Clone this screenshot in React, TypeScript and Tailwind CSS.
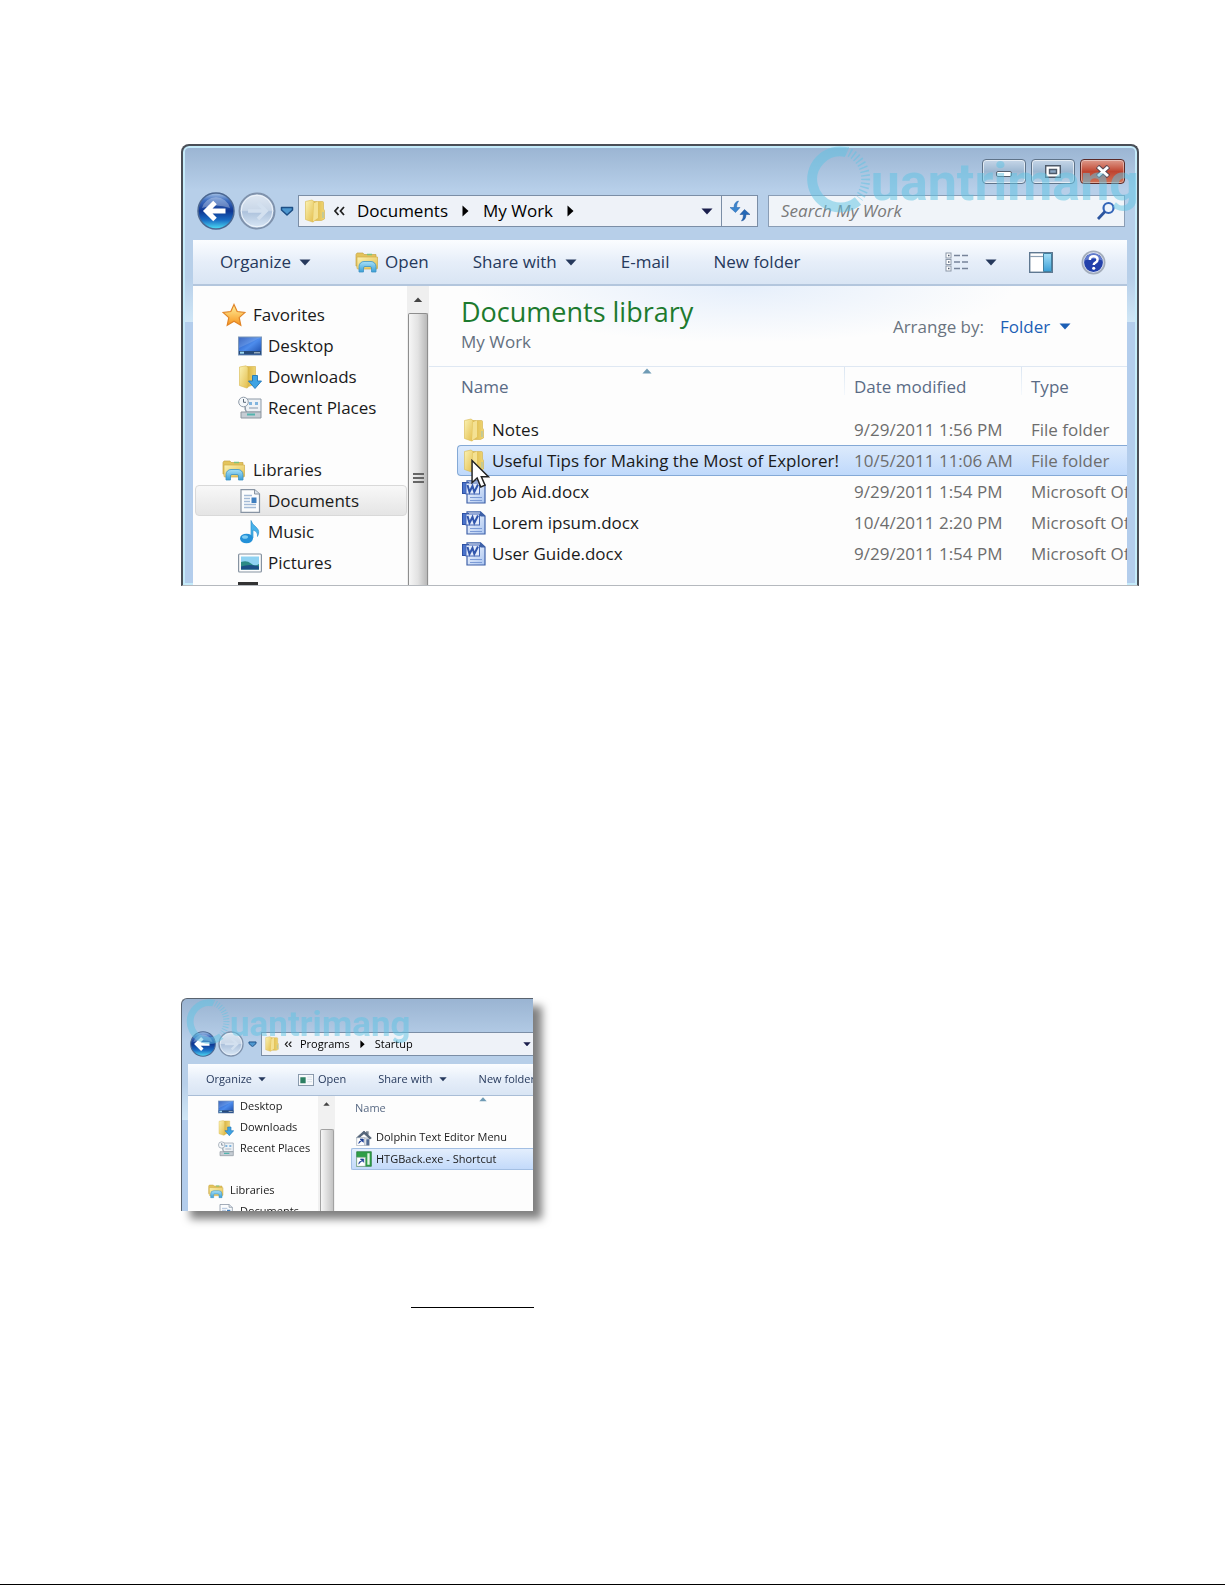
import type { ReactNode } from "react";
import clsx from "clsx";

type IconProps = { className?: string };

type NavItem = {
    label: string;
    icon: (p: IconProps) => ReactNode;
    selected?: boolean;
};

type FileRow = {
    name: string;
    modified: string;
    type: string;
    kind: "folder" | "word";
    selected?: boolean;
};

// Gradients shared by every icon on the page
function Gradients() {
    return (
        <svg width="0" height="0" className="absolute" aria-hidden="true">
            <defs>
                <linearGradient id="navBlue" x1="0" y1="0" x2="0" y2="1">
                    <stop offset="0" stopColor="#a9c4e6" />
                    <stop offset="0.2" stopColor="#3f6fc0" />
                    <stop offset="0.5" stopColor="#0d3591" />
                    <stop offset="0.75" stopColor="#1a6cc4" />
                    <stop offset="1" stopColor="#4fe0f5" />
                </linearGradient>
                <linearGradient id="navGlass" x1="0" y1="0" x2="0" y2="1">
                    <stop offset="0" stopColor="#dfe8f3" />
                    <stop offset="0.48" stopColor="#c9d7e8" />
                    <stop offset="0.52" stopColor="#adc2dc" />
                    <stop offset="1" stopColor="#dbe9f7" />
                </linearGradient>
                <linearGradient id="folderFront" x1="0" y1="0" x2="1" y2="1">
                    <stop offset="0" stopColor="#fbf3b4" />
                    <stop offset="1" stopColor="#e3bd4c" />
                </linearGradient>
                <linearGradient id="folderBack" x1="0" y1="0" x2="1" y2="0">
                    <stop offset="0" stopColor="#d8b344" />
                    <stop offset="1" stopColor="#f0d674" />
                </linearGradient>
                <linearGradient id="sky" x1="0" y1="0" x2="0" y2="1">
                    <stop offset="0" stopColor="#a6e0f8" />
                    <stop offset="1" stopColor="#3b9fd6" />
                </linearGradient>
                <linearGradient id="starFill" x1="0" y1="0" x2="0" y2="1">
                    <stop offset="0" stopColor="#fff3a0" />
                    <stop offset="1" stopColor="#f7941d" />
                </linearGradient>
                <linearGradient id="screen" x1="0" y1="0" x2="1" y2="1">
                    <stop offset="0" stopColor="#1b4db4" />
                    <stop offset="0.5" stopColor="#4d8cec" />
                    <stop offset="1" stopColor="#1746a4" />
                </linearGradient>
                <linearGradient id="wordPage" x1="0" y1="0" x2="1" y2="1">
                    <stop offset="0" stopColor="#ffffff" />
                    <stop offset="1" stopColor="#a9c4f0" />
                </linearGradient>
            </defs>
        </svg>
    );
}

function BackIcon({ className }: IconProps) {
    return (
        <svg viewBox="0 0 38 38" className={className} aria-hidden="true">
            <circle cx="19" cy="19" r="18" fill="url(#navBlue)" stroke="#4b6791" strokeWidth="1.5" />
            <path d="M5 16a14.500 14.500 0 0 1 28 0q-14-5-28 0z" fill="#fff" opacity="0.3" />
            <path d="M18 10.500 9.500 19l8.500 8.500M11 19h17.500" fill="none" stroke="#fff" strokeWidth="5" />
        </svg>
    );
}

function ForwardIcon({ className }: IconProps) {
    return (
        <svg viewBox="0 0 38 38" className={className} aria-hidden="true">
            <circle cx="19" cy="19" r="17.500" fill="url(#navGlass)" stroke="#7f92ac" strokeWidth="2" />
            <circle cx="19" cy="19" r="15.800" fill="none" stroke="#eef4fb" strokeWidth="1" />
            <path d="m20 11 8 8-8 8M27 19H10" fill="none" stroke="#d3e0ef" strokeWidth="3.500" />
        </svg>
    );
}

function FolderIcon({ className }: IconProps) {
    return (
        <svg viewBox="0 0 24 24" className={className} aria-hidden="true">
            <path d="M10 2.500h9.500a1 1 0 0 1 1 1V10l1 1.500V20l-3 1.500H10z" fill="url(#folderBack)" stroke="#d4b04a" strokeWidth="0.600" />
            <path d="M2.500 2.500 9 1l2 1.500v20L9.500 23l-7-2.500z" fill="url(#folderFront)" stroke="#d9b84f" strokeWidth="0.600" />
            <path d="m11 4 4-1.500V19l-5 3.500z" fill="#f4e193" />
            <path d="M20 13v6" stroke="#b9c7a0" strokeWidth="1.500" />
        </svg>
    );
}

function LibraryIcon({ className }: IconProps) {
    return (
        <svg viewBox="0 0 24 24" className={className} aria-hidden="true">
            <path d="M1 4.500 2 3h6l1 1.500h12V16H1z" fill="#e3c45c" stroke="#c7a545" strokeWidth="0.700" />
            <path d="M2 7h20.500v11a1 1 0 0 1-1 1H3a1 1 0 0 1-1-1z" fill="url(#folderFront)" stroke="#d0ad48" strokeWidth="0.700" />
            <path d="M12 4.500h5" stroke="#7fc27c" strokeWidth="1.500" />
            <path d="M4 22v-5.500a5 5 0 0 1 5-5h7a5 5 0 0 1 5 5V22h-4.500v-4a1.500 1.500 0 0 0-1.500-1.500h-5A1.500 1.500 0 0 0 8.500 18v4z" fill="url(#sky)" stroke="#3c93c4" strokeWidth="0.800" />
        </svg>
    );
}

function StarIcon({ className }: IconProps) {
    return (
        <svg viewBox="0 0 24 24" className={className} aria-hidden="true">
            <path d="m12 1.500 3.200 7 7.800.9-5.800 5.200 1.600 7.600-6.800-3.900-6.800 3.900 1.600-7.600L1 9.400l7.800-.9z" fill="url(#starFill)" stroke="#e08427" strokeWidth="1.200" />
        </svg>
    );
}

function DesktopIcon({ className }: IconProps) {
    return (
        <svg viewBox="0 0 24 24" className={className} aria-hidden="true">
            <rect x="0.500" y="3" width="23" height="18" fill="url(#screen)" stroke="#7d97b8" />
            <path d="M1 3.500h22L1 14z" fill="#fff" opacity="0.150" />
            <rect x="1" y="17" width="22" height="3.500" fill="#274a78" />
            <path d="M2 18.700h4" stroke="#9fd8f0" strokeWidth="2" />
            <path d="M16 18.700h6" stroke="#96a9bd" strokeWidth="1.500" />
        </svg>
    );
}

function DownloadsIcon({ className }: IconProps) {
    return (
        <svg viewBox="0 0 24 24" className={className} aria-hidden="true">
            <path d="M9 1.500h8.500V19L9 22z" fill="url(#folderBack)" stroke="#d4b04a" strokeWidth="0.600" />
            <path d="M1.500 2 8 .8l2 1.700v20l-1.500.500-7-2.500z" fill="url(#folderFront)" stroke="#d9b84f" strokeWidth="0.600" />
            <path d="M14.500 10.500h5V16h4L17 23.500 10.500 16h4z" fill="#3fa3e3" stroke="#1f76b8" strokeWidth="0.900" />
        </svg>
    );
}

function RecentIcon({ className }: IconProps) {
    return (
        <svg viewBox="0 0 24 24" className={className} aria-hidden="true">
            <path d="M6 3h17v13H8z" fill="#eef2f6" stroke="#8d99a6" />
            <path d="M11 6h3v3h-3zM17 6h3v3h-3z" fill="#7fb4de" />
            <path d="M11 12h9" stroke="#a8b6c4" strokeWidth="1.500" />
            <path d="M3 16h20v6H3z" fill="#c5ccd3" stroke="#8d969f" />
            <path d="M9 18.500h8" stroke="#52b4ae" strokeWidth="2" />
            <path d="M7 10q-1 4 2 6" fill="none" stroke="#8d99a6" />
            <circle cx="5.500" cy="6" r="4.800" fill="#f4f7fa" stroke="#8f9ba8" />
            <path d="M5.500 3v3.300H8" fill="none" stroke="#5b6a7a" />
        </svg>
    );
}

function DocumentIcon({ className }: IconProps) {
    return (
        <svg viewBox="0 0 24 24" className={className} aria-hidden="true">
            <path d="M3 .7h13.500L21.500 5v18.300H3z" fill="#fbfcfd" stroke="#8894a3" strokeWidth="1.200" />
            <path d="M16.500.7V5h5" fill="#dbe2ea" stroke="#8894a3" />
            <path d="M6 6.500h8M6 9.500h6M6 12.500h6M6 15.500h12M6 18.500h12" stroke="#a3bad6" strokeWidth="1.300" />
            <path d="M13.500 8.500h5V14h-5z" fill="#3f7fc0" />
        </svg>
    );
}

function MusicIcon({ className }: IconProps) {
    return (
        <svg viewBox="0 0 24 24" className={className} aria-hidden="true">
            <path d="M13 .5q1 3.500 5 6.500 4.500 4 1.500 9.500.500-5-4.500-6.500v8h-2z" fill="#48b2ea" stroke="#2487c4" strokeWidth="0.600" />
            <ellipse cx="8.500" cy="18.500" rx="6.500" ry="4.800" fill="#2491d8" />
            <ellipse cx="7" cy="17" rx="3" ry="1.800" fill="#7fcdf3" />
        </svg>
    );
}

function PicturesIcon({ className }: IconProps) {
    return (
        <svg viewBox="0 0 24 24" className={className} aria-hidden="true">
            <rect x="0.600" y="3" width="22.800" height="18" rx="1" fill="#fdfdfd" stroke="#8693a1" strokeWidth="1.200" />
            <path d="M3 5.500h18v13H3z" fill="#8fd2f2" />
            <path d="M3 11q6-2 10 1.500t8 .5v5.500H3z" fill="#2c8a86" />
            <path d="M3 15.500q9-3 18 0v3H3z" fill="#1c4f86" />
        </svg>
    );
}

function WordIcon({ className }: IconProps) {
    return (
        <svg viewBox="0 0 24 24" className={className} aria-hidden="true">
            <path d="M5 .8h13.500L23 5v18H5z" fill="url(#wordPage)" stroke="#3e61a8" strokeWidth="1.200" />
            <path d="M18.500.8V5H23" fill="#3e61a8" stroke="#3e61a8" />
            <path d="M8 17.500h12M8 20.500h12" stroke="#7c9bd6" strokeWidth="1.200" />
            <rect x="0.500" y="2.500" width="6" height="11" fill="#4b74cc" stroke="#2f51a3" />
            <rect x="4" y="3" width="13.500" height="11" fill="#e4ecfb" stroke="#4467b5" />
            <path d="m5.500 5 2 7 3-6 1.800 6L16 4.500" fill="none" stroke="#3156ac" strokeWidth="2" />
        </svg>
    );
}

function AppWindowIcon({ className }: IconProps) {
    return (
        <svg viewBox="0 0 24 18" className={className} aria-hidden="true">
            <rect x="0.700" y="0.700" width="22.600" height="16.600" fill="#f7f9fb" stroke="#8494a8" strokeWidth="1.400" />
            <path d="M3.500 5h8v9h-8z" fill="#2d7f62" />
            <path d="M14 4.500h7M14 8h7M14 11.500h7" stroke="#c8d3df" />
        </svg>
    );
}

function HomeShortcutIcon({ className }: IconProps) {
    return (
        <svg viewBox="0 0 24 24" className={className} aria-hidden="true">
            <path d="M4 12h16v11H4z" fill="#e5e9ee" stroke="#8793a0" />
            <path d="M15 2h4v5h-4z" fill="#7b8794" />
            <path d="M12 1.500 23 12l-2 1.500L12 5.500 3 13l-2-1.500z" fill="#56677c" stroke="#43536a" />
            <path d="M15.500 14h4v9h-4z" fill="#526b92" />
            <path d="M1 11.500h12v12H1z" fill="#fff" stroke="#9aa7b5" />
            <path d="M4 20.500q0-4.500 5-4.500M6 13.500h5v5z" fill="#1d3f95" stroke="#1d3f95" />
        </svg>
    );
}

function ExeShortcutIcon({ className }: IconProps) {
    return (
        <svg viewBox="0 0 24 24" className={className} aria-hidden="true">
            <path d="M1 1h22v22H1z" fill="#2f9e48" stroke="#1c7331" />
            <path d="M17 3.500h3.500v17H17z" fill="#e4f6e6" />
            <path d="M1 9.500h13v13.500H1z" fill="#fff" stroke="#8aa897" />
            <path d="M4 20q0-5 5-5M6.500 12h5v5z" fill="#1d3f95" stroke="#1d3f95" />
        </svg>
    );
}

function RefreshIcon({ className }: IconProps) {
    return (
        <svg viewBox="0 0 22 22" className={className} aria-hidden="true">
            <path d="M9.500 1Q5 2 5 7.500H1l5.500 5 4.500-5H7.500Q7.500 3.500 9.500 1z" fill="#3b86cf" stroke="#1f5fa9" strokeWidth="0.500" />
            <path d="M12.500 21q4.500-1 4.500-6.500h4l-5.500-5-4.500 5h3.500q0 4-2 6.500z" fill="#2468b6" stroke="#1c4f93" strokeWidth="0.500" />
        </svg>
    );
}

function SearchIcon({ className }: IconProps) {
    return (
        <svg viewBox="0 0 20 20" className={className} aria-hidden="true">
            <circle cx="12.500" cy="7" r="5" fill="#eef4fc" stroke="#3465b8" strokeWidth="2.200" />
            <path d="m9 10.500-7 7.500" stroke="#2c559f" strokeWidth="2.800" />
        </svg>
    );
}

function ViewIcon({ className }: IconProps) {
    return (
        <svg viewBox="0 0 24 20" className={className} aria-hidden="true">
            {[1, 7.5, 14].map((y) => (
                <g key={y}>
                    <rect x="1" y={y} width="5" height="5" fill="#fff" stroke="#8b97a8" />
                    <path d={`M3 ${y + 2.5}h1.500`} stroke="#4d5b70" strokeWidth="1.500" />
                    <path d={`M9 ${y + 2.5}h6M17 ${y + 2.5}h6`} stroke="#77849a" strokeWidth="1.500" />
                </g>
            ))}
        </svg>
    );
}

function PreviewIcon({ className }: IconProps) {
    return (
        <svg viewBox="0 0 24 21" className={className} aria-hidden="true">
            <rect x="0.700" y="0.700" width="22.600" height="19.600" fill="#fff" stroke="#5f7891" strokeWidth="1.400" />
            <path d="M1 4.500h22" stroke="#8ca0b4" strokeWidth="1.200" />
            <path d="M14.500 1.500h8v18h-8z" fill="url(#sky)" stroke="#42809f" />
        </svg>
    );
}

function HelpIcon({ className }: IconProps) {
    return (
        <svg viewBox="0 0 24 24" className={className} aria-hidden="true">
            <circle cx="12" cy="12" r="11.500" fill="#a3adbb" />
            <circle cx="12" cy="12" r="9.500" fill="#2341ab" stroke="#d8dfee" strokeWidth="1" />
            <path d="M3.500 10a8.700 8.700 0 0 1 17 0q-8.500-3-17 0z" fill="#8ba2e4" opacity="0.600" />
            <path d="M8.500 9.500q0-3.500 3.700-3.500t3.700 3.200q0 2-2 3-1.700.9-1.700 2.300" fill="none" stroke="#fff" strokeWidth="2.400" />
            <circle cx="12.200" cy="17.500" r="1.500" fill="#fff" />
        </svg>
    );
}

function Caret({ className }: IconProps) {
    return (
        <svg viewBox="0 0 12 7" className={clsx("shrink-0", className)} aria-hidden="true">
            <path d="M.5.500h11L6 6.500z" fill="currentColor" />
        </svg>
    );
}

// Rounded, outlined caret beside the travel buttons
function HistoryCaret({ className }: IconProps) {
    return (
        <svg viewBox="0 0 14 10" className={clsx("shrink-0", className)} aria-hidden="true">
            <path d="M1.500 1.500h11V4L7 9 1.500 4z" fill="#4d97cf" stroke="#1d4f86" strokeWidth="1.500" strokeLinejoin="round" />
        </svg>
    );
}

function CaretRight({ className }: IconProps) {
    return (
        <svg viewBox="0 0 7 12" className={clsx("shrink-0", className)} aria-hidden="true">
            <path d="M.5.500v11L6.500 6z" fill="currentColor" />
        </svg>
    );
}

function CaretUp({ className }: IconProps) {
    return (
        <svg viewBox="0 0 12 7" className={clsx("shrink-0", className)} aria-hidden="true">
            <path d="M.5 6.500h11L6 .5z" fill="currentColor" />
        </svg>
    );
}

function Chevrons({ className }: IconProps) {
    return (
        <svg viewBox="0 0 12 10" className={clsx("shrink-0", className)} aria-hidden="true">
            <path d="M5.500 1 2 5l3.500 4M11 1 7.500 5 11 9" fill="none" stroke="#222" strokeWidth="1.800" />
        </svg>
    );
}

function Cursor({ className }: IconProps) {
    return (
        <svg viewBox="0 0 18 28" className={className} aria-hidden="true">
            <path d="M1 1.500v21l4.800-4.500 3.500 8.500 4-1.700-3.500-8h6.700z" fill="#fff" stroke="#222" strokeWidth="1.400" />
        </svg>
    );
}

function WatermarkRing({ className }: IconProps) {
    return (
        <svg viewBox="0 0 68 68" className={className} aria-hidden="true">
            <path d="M43 6A28 28 0 1 0 55 55" fill="none" stroke="currentColor" strokeWidth="10" />
            <path d="M43 5A30 30 0 0 1 56 52" fill="none" stroke="currentColor" strokeWidth="9" strokeDasharray="1.500 2.500" />
        </svg>
    );
}

const favorites: NavItem[] = [
    { label: "Desktop", icon: DesktopIcon },
    { label: "Downloads", icon: DownloadsIcon },
    { label: "Recent Places", icon: RecentIcon },
];

const libraries: NavItem[] = [
    { label: "Documents", icon: DocumentIcon, selected: true },
    { label: "Music", icon: MusicIcon },
    { label: "Pictures", icon: PicturesIcon },
];

const files: FileRow[] = [
    { name: "Notes", modified: "9/29/2011 1:56 PM", type: "File folder", kind: "folder" },
    { name: "Useful Tips for Making the Most of Explorer!", modified: "10/5/2011 11:06 AM", type: "File folder", kind: "folder", selected: true },
    { name: "Job Aid.docx", modified: "9/29/2011 1:54 PM", type: "Microsoft Of", kind: "word" },
    { name: "Lorem ipsum.docx", modified: "10/4/2011 2:20 PM", type: "Microsoft Of", kind: "word" },
    { name: "User Guide.docx", modified: "9/29/2011 1:54 PM", type: "Microsoft Of", kind: "word" },
];

function NavRow({ item }: { item: NavItem }) {
    const Icon = item.icon;
    return (
        <button
            className={clsx(
                "flex h-[31px] shrink-0 items-center gap-1.5 rounded-sm border pl-[42px] text-left",
                item.selected ? "border-[#d9d9d9] bg-linear-to-b from-[#f8f8f8] to-[#e5e5e5]" : "border-transparent",
            )}
        >
            <Icon className="size-6 shrink-0" />
            {item.label}
        </button>
    );
}

function NavHeading({ label, icon: Icon }: NavItem) {
    return (
        <button className="flex h-[31px] shrink-0 items-center gap-[7px] pl-[27px] text-left">
            <Icon className="size-6 shrink-0" />
            {label}
        </button>
    );
}

function WindowButtons() {
    return (
        <div className="flex justify-end gap-[5px]">
            <button aria-label="Minimize" className="grid h-[25px] w-11 place-items-center rounded-sm border border-[#5f7389] bg-linear-to-b from-[#c6d6e8] via-[#9db7d1] to-[#bcd2e8] inset-ring inset-ring-white/60">
                <span className="mt-1 h-[6px] w-4 rounded-xs border border-[#55606e] bg-white" />
            </button>
            <button aria-label="Maximize" className="grid h-[25px] w-11 place-items-center rounded-sm border border-[#5f7389] bg-linear-to-b from-[#c6d6e8] via-[#9db7d1] to-[#bcd2e8] inset-ring inset-ring-white/60">
                <svg viewBox="0 0 16 13" className="w-4" aria-hidden="true">
                    <path d="M.7.7h14.600v11.600H.7z" fill="#fff" stroke="#4d5969" strokeWidth="1.400" />
                    <path d="M4.500 4.500h7v4h-7z" fill="#8ba6c2" stroke="#4d5969" strokeWidth="1.400" />
                </svg>
            </button>
            <button aria-label="Close" className="grid h-[25px] w-[45px] place-items-center rounded-sm border border-[#5a2a28] bg-linear-to-b from-[#dd9a8c] via-[#bf4430] to-[#cf7257] inset-ring inset-ring-white/40">
                <svg viewBox="0 0 16 13" className="w-4" aria-hidden="true">
                    <path d="m2.500 1.500 11 10m0-10-11 10" stroke="#5b4a55" strokeWidth="5" />
                    <path d="m3 2 10 9m0-9L3 11" stroke="#fff" strokeWidth="3" />
                </svg>
            </button>
        </div>
    );
}

function FileTable() {
    return (
        <table className="w-full table-fixed border-separate border-spacing-0 text-left whitespace-nowrap">
            <thead>
                <tr className="h-10 text-[#5a6b85]">
                    <th className="border-t border-[#dfe8f3] pl-8 font-normal">
                        <button>Name</button>
                    </th>
                    <th className="w-[177px] border-t border-[#dfe8f3] bg-linear-to-b from-[#dbe6f2] to-[#f4f8fc] bg-[length:1px_28px] bg-no-repeat pl-2.5 font-normal">
                        <button>Date modified</button>
                    </th>
                    <th className="w-[106px] border-t border-[#dfe8f3] bg-linear-to-b from-[#dbe6f2] to-[#f4f8fc] bg-[length:1px_28px] bg-no-repeat pl-2.5 font-normal">
                        <button>Type</button>
                    </th>
                </tr>
                <tr className="h-2" />
            </thead>
            <tbody>
                {files.map((f) => {
                    const cell = f.selected ? "border-y border-[#84a9d6] bg-linear-to-b from-[#dceafc] to-[#bfd9fb]" : "";
                    return (
                        <tr key={f.name} className="h-[31px] text-[#6d6d6d]">
                            <td className="p-0 pl-7 text-[#1a1a1a]">
                                <div className={clsx("flex h-[31px] items-center gap-1.5 rounded-l-sm border-l pl-1", cell, !f.selected && "border-transparent")}>
                                    {f.kind === "folder" ? <FolderIcon className="size-6 shrink-0" /> : <WordIcon className="size-6 shrink-0" />}
                                    {f.name}
                                </div>
                            </td>
                            <td className={clsx("pl-2.5", cell)}>{f.modified}</td>
                            <td className={clsx("overflow-hidden pl-2.5", cell)}>{f.type}</td>
                        </tr>
                    );
                })}
            </tbody>
        </table>
    );
}

function DocumentsWindow() {
    return (
        <section className="relative flex h-[442px] flex-col overflow-hidden rounded-t-lg border-x-2 border-t-2 border-b border-[#4a4f57] border-b-[#b5b9be] bg-[linear-gradient(#9ab4d2,#b7cfe9_10%,#b7cfe9_30%,#cfe6f6_40%,#b3cdec_40%)] px-2.5 text-[17px] inset-shadow-[0_0_0_2px_#c5ebfa]">
            <div className="pt-[13px] pr-0.5">
                <WindowButtons />
            </div>

            <div className="mt-2 flex items-center">
                <div className="flex items-center gap-[3px] pl-1">
                    <button aria-label="Back">
                        <BackIcon className="size-[38px]" />
                    </button>
                    <button aria-label="Forward">
                        <ForwardIcon className="size-[38px]" />
                    </button>
                </div>
                <button aria-label="Recent pages" className="px-1">
                    <HistoryCaret className="w-3.5" />
                </button>
                <div className="flex h-8 min-w-0 flex-1 items-center border border-[#7b8ea6] bg-[#eef2f8] pl-1">
                    <FolderIcon className="size-6 shrink-0" />
                    <Chevrons className="ml-1.5 w-3" />
                    <button className="ml-3">Documents</button>
                    <CaretRight className="ml-3.5 w-[7px]" />
                    <button className="ml-3.5">My Work</button>
                    <CaretRight className="ml-3.5 w-[7px]" />
                    <button aria-label="Previous locations" className="mr-2 ml-auto">
                        <Caret className="w-3 text-[#1b1f4d]" />
                    </button>
                    <button aria-label="Refresh" className="grid h-full w-9 place-items-center border-l border-[#7b8ea6]">
                        <RefreshIcon className="size-[22px]" />
                    </button>
                </div>
                <label className="mr-0.5 ml-2.5 flex h-8 w-[357px] items-center border border-[#8a9db5] bg-[#f0f4f9] pr-2 pl-3">
                    <input
                        type="text"
                        aria-label="Search My Work"
                        placeholder="Search My Work"
                        className="min-w-0 flex-1 bg-transparent italic outline-none placeholder:text-[#7a7a7a]"
                    />
                    <SearchIcon className="size-5" />
                </label>
            </div>

            <div className="mt-2.5 flex h-[46px] shrink-0 items-center border-b-2 border-[#b3c6dd] bg-linear-to-b from-[#fbfdff] via-[#e6eef9] to-[#d9e5f4] pr-[21px] pl-[27px] whitespace-nowrap text-[#26395c]">
                <button className="flex items-center gap-2">
                    Organize <Caret className="w-3" />
                </button>
                <button className="ml-11 flex items-center gap-1.5">
                    <LibraryIcon className="size-6" /> Open
                </button>
                <button className="ml-11 flex items-center gap-2">
                    Share with <Caret className="w-3" />
                </button>
                <button className="ml-11">E-mail</button>
                <button className="ml-11">New folder</button>
                <button aria-label="Change your view" className="ml-auto flex items-center gap-4">
                    <ViewIcon className="w-6" /> <Caret className="w-3" />
                </button>
                <button aria-label="Show the preview pane" className="ml-8">
                    <PreviewIcon className="w-6" />
                </button>
                <button aria-label="Help" className="ml-7">
                    <HelpIcon className="size-[25px]" />
                </button>
            </div>

            <div className="flex min-h-0 flex-1 overflow-hidden bg-[#fdfdfd]">
                <nav className="flex w-[214px] shrink-0 flex-col pt-[13px] pl-0.5 text-[#1a1a1a]">
                    <NavHeading label="Favorites" icon={StarIcon} />
                    {favorites.map((item) => (
                        <NavRow key={item.label} item={item} />
                    ))}
                    <div className="h-[31px] shrink-0" />
                    <NavHeading label="Libraries" icon={LibraryIcon} />
                    {libraries.map((item) => (
                        <NavRow key={item.label} item={item} />
                    ))}
                    <div className="mt-1 ml-[43px] h-4 w-5 shrink-0 bg-[#333]" />
                </nav>

                <div className="flex w-[22px] shrink-0 flex-col items-center bg-[#efefef]">
                    <button aria-label="Scroll up" className="grid h-[27px] w-full shrink-0 place-items-center">
                        <CaretUp className="w-2.5 text-[#444]" />
                    </button>
                    <div className="flex w-5 flex-1 flex-col items-center justify-center gap-0.5 rounded-t-xs border border-b-0 border-[#8e8e8e] bg-linear-to-r from-[#f6f6f6] via-[#e2e2e2] to-[#b9b9b9] pt-14">
                        <span className="h-0.5 w-[11px] bg-[#666]" />
                        <span className="h-0.5 w-[11px] bg-[#666]" />
                        <span className="h-0.5 w-[11px] bg-[#666]" />
                    </div>
                </div>

                <main className="relative flex min-w-0 flex-1 flex-col">
                    <header className="flex h-20 shrink-0 items-start justify-between bg-[radial-gradient(ellipse_at_45%_0%,#e6effb,#fdfdfd_50%)] pt-2 pr-14 pl-8">
                        <div>
                            <h1 className="text-[27px] leading-9 text-[#1d7a2e]">Documents library</h1>
                            <p className="leading-6 text-[#64707f]">My Work</p>
                        </div>
                        <div className="mt-5 flex items-center">
                            <label htmlFor="arrange" className="text-[#6a7480]">
                                Arrange by:
                            </label>
                            <select id="arrange" className="ml-4 appearance-none bg-transparent text-[#1c5fb5] outline-none">
                                <option>Folder</option>
                            </select>
                            <Caret className="ml-2 w-3 text-[#1c5fb5]" />
                        </div>
                    </header>
                    <FileTable />
                    <CaretUp className="absolute top-[82px] left-[213px] w-2.5 text-[#6f9bb5]" />
                    <Cursor className="absolute top-[173px] left-[42px] w-[19px]" />
                </main>
            </div>

            <div className="pointer-events-none absolute top-0 -right-0.5 flex items-start text-[#5fc3e3] opacity-50">
                <WatermarkRing className="size-[68px]" />
                <span className="font-['Roboto',sans-serif] text-[52px] leading-[74px] font-bold">uantrimang</span>
            </div>
        </section>
    );
}

function SmallNavRow({ item }: { item: NavItem }) {
    const Icon = item.icon;
    return (
        <button className="flex h-[21px] shrink-0 items-center gap-1.5 pl-[30px] text-left">
            <Icon className="size-4 shrink-0" />
            {item.label}
        </button>
    );
}

function StartupWindow() {
    return (
        <section className="relative flex h-[213px] w-[352px] flex-col overflow-hidden rounded-tl-md border-t border-l border-[#59636f] bg-[linear-gradient(#9ab4d2,#b7cfe9_20%,#b7cfe9_40%,#cfe6f6_57%,#b3cdec_57%)] pl-1.5 text-[11px] whitespace-nowrap">
            <div className="flex items-center pt-8">
                <button aria-label="Back" className="ml-0.5">
                    <BackIcon className="size-[26px]" />
                </button>
                <button aria-label="Forward" className="ml-0.5">
                    <ForwardIcon className="size-[26px]" />
                </button>
                <button aria-label="Recent pages" className="px-1">
                    <HistoryCaret className="w-[9px]" />
                </button>
                <div className="flex h-6 flex-1 items-center border border-r-0 border-[#7b8ea6] bg-[#eef2f8] pl-0.5">
                    <FolderIcon className="size-4" />
                    <Chevrons className="ml-1 w-2" />
                    <button className="ml-2">Programs</button>
                    <CaretRight className="ml-2.5 w-[5px]" />
                    <button className="ml-2.5">Startup</button>
                    <button aria-label="Previous locations" className="mr-0.5 ml-auto">
                        <Caret className="w-2 text-[#1b1f4d]" />
                    </button>
                </div>
            </div>

            <div className="mt-[7px] flex h-8 shrink-0 items-center overflow-hidden border-b border-[#a9bdd6] bg-linear-to-b from-[#fbfdff] via-[#e6eef9] to-[#d9e5f4] pl-[18px] text-[#26395c]">
                <button className="flex items-center gap-1.5">
                    Organize <Caret className="w-2" />
                </button>
                <button className="ml-8 flex items-center gap-1">
                    <AppWindowIcon className="w-4" /> Open
                </button>
                <button className="ml-8 flex items-center gap-1.5">
                    Share with <Caret className="w-2" />
                </button>
                <button className="ml-8">New folder</button>
            </div>

            <div className="flex min-h-0 flex-1 overflow-hidden bg-[#fdfdfd]">
                <nav className="flex w-[130px] shrink-0 flex-col overflow-hidden text-[#1a1a1a]">
                    {favorites.map((item) => (
                        <SmallNavRow key={item.label} item={item} />
                    ))}
                    <button className="mt-[21px] flex h-[21px] shrink-0 items-center gap-1.5 pl-5 text-left">
                        <LibraryIcon className="size-4 shrink-0" />
                        Libraries
                    </button>
                    <SmallNavRow item={libraries[0]} />
                </nav>
                <div className="flex w-[17px] shrink-0 flex-col items-center bg-[#f1f1f1]">
                    <button aria-label="Scroll up" className="grid h-[17px] w-full place-items-center">
                        <CaretUp className="w-[7px] text-[#444]" />
                    </button>
                    <div className="mt-4 w-[14px] flex-1 rounded-t-xs border border-b-0 border-[#a2a2a2] bg-linear-to-r from-[#f6f6f6] to-[#c4c4c4]" />
                </div>
                <main className="relative min-w-0 flex-1 pt-[3px] pl-4">
                    <table className="w-full border-collapse text-left">
                        <thead>
                            <tr className="h-[18px] text-[#5a6b85]">
                                <th className="pl-1 font-normal">
                                    <button>Name</button>
                                </th>
                            </tr>
                            <tr className="h-2.5" />
                        </thead>
                        <tbody className="text-[#1a1a1a]">
                            <tr>
                                <td className="p-0">
                                    <div className="flex h-[21px] items-center gap-1 pl-[5px]">
                                        <HomeShortcutIcon className="size-4" /> Dolphin Text Editor Menu
                                    </div>
                                </td>
                            </tr>
                            <tr>
                                <td className="p-0">
                                    <div className="flex h-[22px] items-center gap-1 rounded-l-xs border border-r-0 border-[#a3bfe3] bg-linear-to-b from-[#e3eefd] to-[#c3dafa] pl-1">
                                        <ExeShortcutIcon className="size-4" /> HTGBack.exe - Shortcut
                                    </div>
                                </td>
                            </tr>
                        </tbody>
                    </table>
                    <CaretUp className="absolute top-px left-36 w-2 text-[#6f9bb5]" />
                </main>
            </div>

            <div className="pointer-events-none absolute top-0 left-0.5 flex items-start text-[#5fc3e3] opacity-50">
                <WatermarkRing className="size-[46px]" />
                <span className="font-['Roboto',sans-serif] text-[35px] leading-[52px] font-bold">uantrimang</span>
            </div>
        </section>
    );
}

export default function App() {
    return (
        <div className="min-h-screen border-b border-black bg-white pt-36 pr-[86px] pl-[181px] font-['Open_Sans','Noto_Sans',sans-serif]">
            <Gradients />
            <DocumentsWindow />
            <div className="mt-[412px] w-fit drop-shadow-[9px_8px_4px_#00000080]">
                <StartupWindow />
            </div>
            <hr className="mt-24 ml-[230px] w-[123px] border-black" />
        </div>
    );
}
